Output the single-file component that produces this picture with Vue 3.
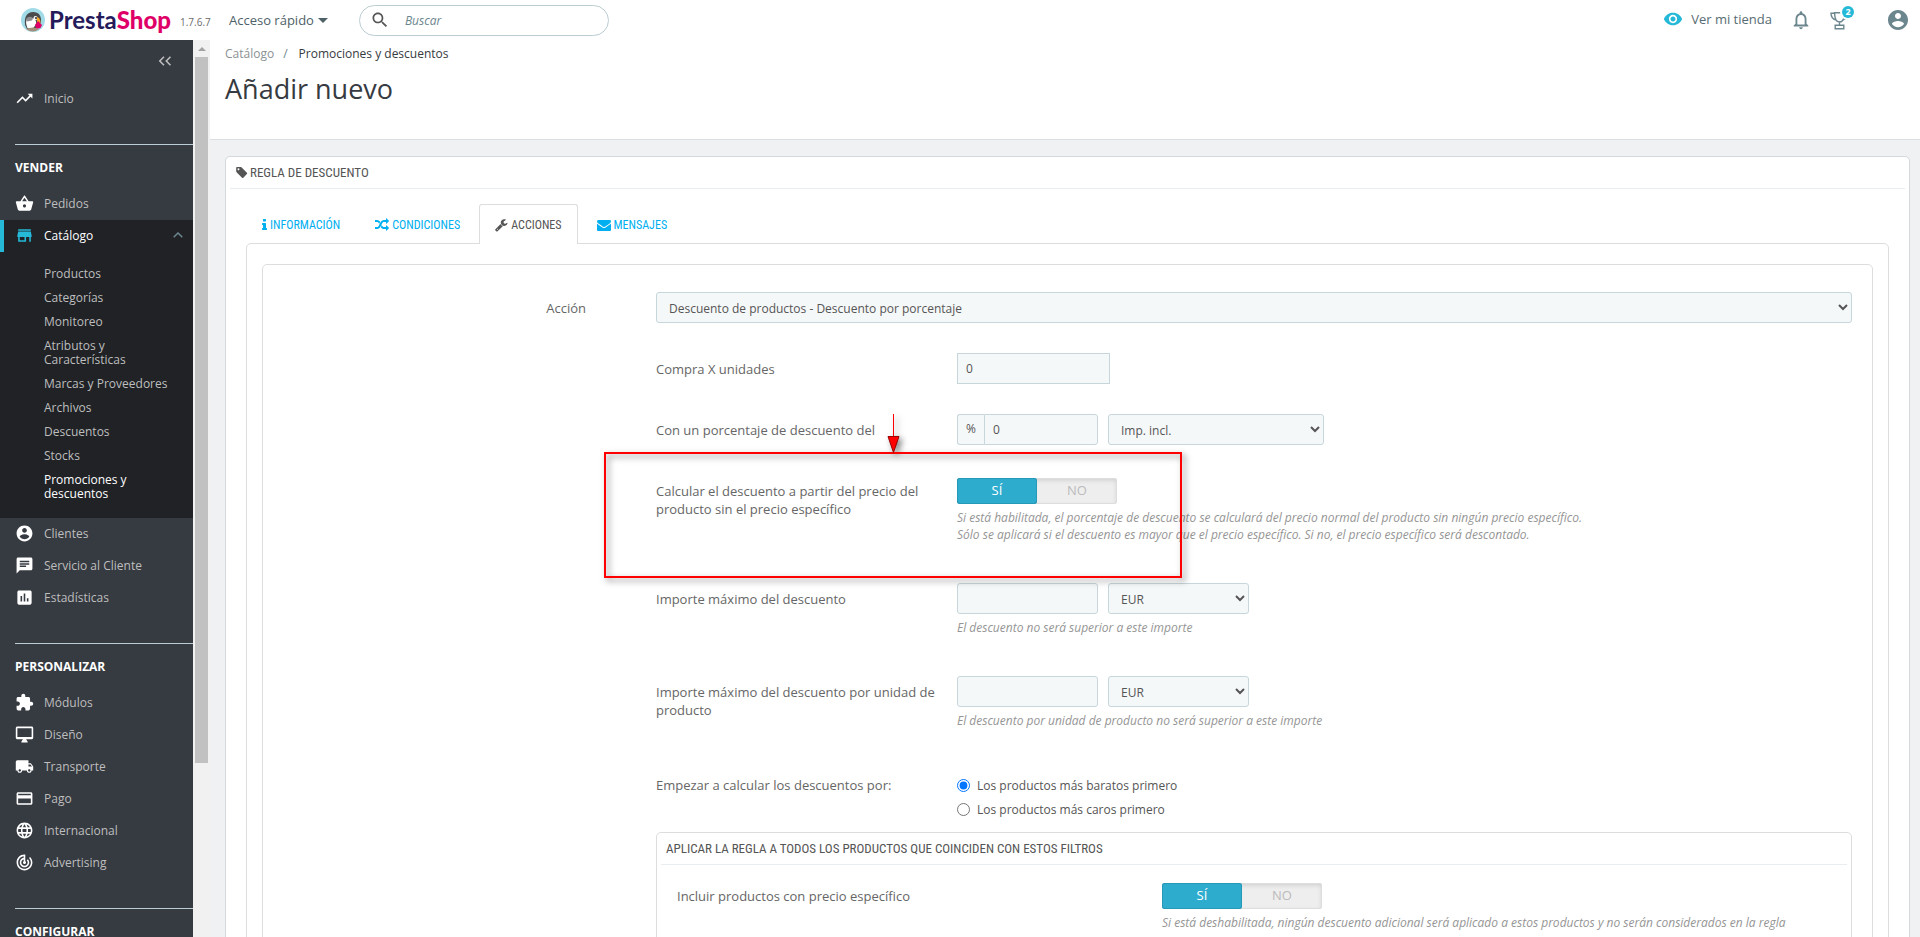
<script setup>
import { ref } from 'vue'

const icons = {
  trend: 'M16 6l2.29 2.29-4.88 4.88-4-4L2 16.59 3.41 18l6-6 4 4 6.3-6.29L22 12V6z',
  basket: 'M17.21 9l-4.38-6.56c-.19-.28-.51-.42-.83-.42-.32 0-.64.14-.83.43L6.79 9H2c-.55 0-1 .45-1 1 0 .09.01.18.04.27l2.54 9.27c.23.84 1 1.46 1.92 1.46h13c.92 0 1.69-.62 1.93-1.46l2.54-9.27L23 10c0-.55-.45-1-1-1h-4.79zM9 9l3-4.4L15 9H9zm3 8c-1.1 0-2-.9-2-2s.9-2 2-2 2 .9 2 2-.9 2-2 2z',
  store: 'M20 4H4v2h16V4zm1 10v-2l-1-5H4l-1 5v2h1v6h10v-6h4v6h2v-6h1zm-9 4H6v-4h6v4z',
  account: 'M12 2C6.48 2 2 6.48 2 12s4.48 10 10 10 10-4.48 10-10S17.52 2 12 2zm0 3c1.66 0 3 1.34 3 3s-1.34 3-3 3-3-1.34-3-3 1.34-3 3-3zm0 14.2c-2.5 0-4.71-1.28-6-3.22.03-1.99 4-3.08 6-3.08 1.99 0 5.97 1.09 6 3.08-1.29 1.94-3.5 3.22-6 3.22z',
  chat: 'M20 2H4c-1.1 0-1.99.9-1.99 2L2 22l4-4h14c1.1 0 2-.9 2-2V4c0-1.1-.9-2-2-2zM6 9h12v2H6V9zm8 5H6v-2h8v2zm4-6H6V6h12v2z',
  chart: 'M19 3H5c-1.1 0-2 .9-2 2v14c0 1.1.9 2 2 2h14c1.1 0 2-.9 2-2V5c0-1.1-.9-2-2-2zM9 17H7v-7h2v7zm4 0h-2V7h2v10zm4 0h-2v-4h2v4z',
  puzzle: 'M20.5 11H19V7c0-1.1-.9-2-2-2h-4V3.5C13 2.12 11.88 1 10.5 1S8 2.12 8 3.5V5H4c-1.1 0-1.99.9-1.99 2v3.8H3.5c1.49 0 2.7 1.21 2.7 2.7s-1.21 2.7-2.7 2.7H2V20c0 1.1.9 2 2 2h3.8v-1.5c0-1.49 1.21-2.7 2.7-2.7 1.49 0 2.7 1.21 2.7 2.7V22H17c1.1 0 2-.9 2-2v-4h1.5c1.38 0 2.5-1.12 2.5-2.5S21.88 11 20.5 11z',
  desktop: 'M21 2H3c-1.1 0-2 .9-2 2v12c0 1.1.9 2 2 2h7l-2 3v1h8v-1l-2-3h7c1.1 0 2-.9 2-2V4c0-1.1-.9-2-2-2zm0 13H3V4h18v11z',
  truck: 'M20 8h-3V4H3c-1.1 0-2 .9-2 2v11h2c0 1.66 1.34 3 3 3s3-1.34 3-3h6c0 1.66 1.34 3 3 3s3-1.34 3-3h2v-5l-3-4zM6 18.5c-.83 0-1.5-.67-1.5-1.5s.67-1.5 1.5-1.5 1.5.67 1.5 1.5-.67 1.5-1.5 1.5zm13.5-9l1.96 2.5H17V9.5h2.5zm-1.5 9c-.83 0-1.5-.67-1.5-1.5s.67-1.5 1.5-1.5 1.5.67 1.5 1.5-.67 1.5-1.5 1.5z',
  card: 'M20 4H4c-1.11 0-1.99.89-1.99 2L2 18c0 1.11.89 2 2 2h16c1.11 0 2-.89 2-2V6c0-1.11-.89-2-2-2zm0 14H4v-6h16v6zm0-10H4V6h16v2z',
  globe: 'M11.99 2C6.47 2 2 6.48 2 12s4.47 10 9.99 10C17.52 22 22 17.52 22 12S17.52 2 11.99 2zm6.93 6h-2.95c-.32-1.25-.78-2.45-1.38-3.56 1.84.63 3.37 1.91 4.33 3.56zM12 4.04c.83 1.2 1.48 2.53 1.91 3.96h-3.82c.43-1.43 1.08-2.76 1.91-3.96zM4.26 14C4.1 13.36 4 12.69 4 12s.1-1.36.26-2h3.38c-.08.66-.14 1.32-.14 2 0 .68.06 1.34.14 2H4.26zm.82 2h2.95c.32 1.25.78 2.45 1.38 3.56-1.84-.63-3.37-1.9-4.33-3.56zm2.95-8H5.08c.96-1.66 2.49-2.93 4.33-3.56C8.81 5.55 8.35 6.75 8.03 8zM12 19.96c-.83-1.2-1.48-2.53-1.91-3.96h3.82c-.43 1.43-1.08 2.76-1.91 3.96zM14.34 14H9.66c-.09-.66-.16-1.32-.16-2 0-.68.07-1.35.16-2h4.68c.09.65.16 1.32.16 2 0 .68-.07 1.34-.16 2zm.25 5.56c.6-1.11 1.06-2.31 1.38-3.56h2.95c-.96 1.65-2.49 2.93-4.33 3.56zM16.36 14c.08-.66.14-1.32.14-2 0-.68-.06-1.34-.14-2h3.38c.16.64.26 1.31.26 2s-.1 1.36-.26 2h-3.38z',
  target: 'M19.07 4.93l-1.41 1.41C19.1 7.79 20 9.79 20 12c0 4.42-3.58 8-8 8s-8-3.58-8-8c0-4.08 3.05-7.44 7-7.93v2.02C8.16 6.57 6 9.03 6 12c0 3.31 2.69 6 6 6s6-2.69 6-6c0-1.66-.67-3.16-1.76-4.24l-1.41 1.41C15.55 9.9 16 10.9 16 12c0 2.21-1.79 4-4 4s-4-1.79-4-4c0-1.86 1.28-3.41 3-3.86v2.14c-.6.35-1 .98-1 1.72 0 1.1.9 2 2 2s2-.9 2-2c0-.74-.4-1.38-1-1.72V2h-1C6.48 2 2 6.48 2 12s4.48 10 10 10 10-4.48 10-10c0-2.76-1.12-5.26-2.93-7.07z',
}

const sections = [
  { items: [{ label: 'Inicio', icon: 'trend' }] },
  {
    title: 'VENDER',
    items: [
      { label: 'Pedidos', icon: 'basket' },
      {
        label: 'Catálogo',
        icon: 'store',
        open: true,
        children: ['Productos', 'Categorías', 'Monitoreo', 'Atributos y Características', 'Marcas y Proveedores', 'Archivos', 'Descuentos', 'Stocks', 'Promociones y descuentos'],
      },
      { label: 'Clientes', icon: 'account' },
      { label: 'Servicio al Cliente', icon: 'chat' },
      { label: 'Estadísticas', icon: 'chart' },
    ],
  },
  {
    title: 'PERSONALIZAR',
    items: [
      { label: 'Módulos', icon: 'puzzle' },
      { label: 'Diseño', icon: 'desktop' },
      { label: 'Transporte', icon: 'truck' },
      { label: 'Pago', icon: 'card' },
      { label: 'Internacional', icon: 'globe' },
      { label: 'Advertising', icon: 'target' },
    ],
  },
  { title: 'CONFIGURAR', items: [] },
]
const currentPage = 'Promociones y descuentos'

const tabs = [
  { label: 'INFORMACIÓN', box: '576 0 640 1792', width: 5, path: 'M1216 1344v128q0 26-19 45t-45 19h-512q-26 0-45-19t-19-45v-128q0-26 19-45t45-19h64v-384h-64q-26 0-45-19t-19-45v-128q0-26 19-45t45-19h384q26 0 45 19t19 45v576h64q26 0 45 19t19 45zm-128-1152v192q0 26-19 45t-45 19h-256q-26 0-45-19t-19-45v-192q0-26 19-45t45-19h256q26 0 45 19t19 45z' },
  { label: 'CONDICIONES', box: '0 0 1792 1792', width: 14, path: 'M666 481q-60 92-137 273-22-45-37-72.5t-40.5-63.5-51-56.5-63-35-81.5-14.5h-224q-14 0-23-9t-9-23v-192q0-14 9-23t23-9h224q250 0 410 225zm1126 799q0 14-9 23l-320 320q-9 9-23 9-13 0-22.5-9.5t-9.5-22.5v-192q-32 0-85 .5t-81 1-73-1-71-5-64-10.5-63-18.5-58-28.5-59-40-55-53.5-56-69.5q59-93 136-273 22 45 37 72.5t40.5 63.5 51 56.5 63 35 81.5 14.5h256v-192q0-14 9-23t23-9q12 0 24 10l319 319q9 9 9 23zm0-896q0 14-9 23l-320 320q-9 9-23 9-13 0-22.5-9.5t-9.5-22.5v-192h-256q-48 0-87 15t-69 45-51 61.5-45 77.5q-32 62-78 171-29 66-49.5 111t-54 105-64 100-74 83-90 68.5-106.5 42-128 16.5h-224q-14 0-23-9t-9-23v-192q0-14 9-23t23-9h224q48 0 87-15t69-45 51-61.5 45-77.5q32-62 78-171 29-66 49.5-111t54-105 64-100 74-83 90-68.5 106.5-42 128-16.5h256v-192q0-14 9-23t23-9q12 0 24 10l319 319q9 9 9 23z' },
  { label: 'ACCIONES', box: '64 0 1728 1792', width: 13, path: 'M448 1472q0-26-19-45t-45-19-45 19-19 45 19 45 45 19 45-19 19-45zm644-420l-682 682q-37 37-90 37-52 0-91-37l-106-108q-38-36-38-90 0-53 38-91l681-681q39 98 114.5 173.5t173.5 114.5zm634-435q0 39-23 106-47 134-164.5 217.5t-258.5 83.5q-185 0-316.5-131.5t-131.5-316.5 131.5-316.5 316.5-131.5q58 0 121.5 16.5t107.5 46.5q16 11 16 28t-16 28l-293 169v224l193 107q5-3 79-48.5t135.5-81 70.5-35.5q15 0 23.5 10t8.5 25z' },
  { label: 'MENSAJES', box: '0 0 1792 1792', width: 14, path: 'M1792 710v794q0 66-47 113t-113 47h-1472q-66 0-113-47t-47-113v-794q44 49 101 87 362 246 497 345 57 42 92.5 65.5t94.5 48 110 24.5h2q51 0 110-24.5t94.5-48 92.5-65.5q170-123 498-345 57-39 100-87zm0-294q0 79-49 151t-122 123q-376 261-468 325-10 7-42.5 31t-54 38.5-52 32.5-57.5 27-50 9h-2q-23 0-50-9t-57.5-27-52-32.5-54-38.5-42.5-31q-91-64-262-182.5t-205-142.5q-62-42-117-115.5t-55-136.5q0-78 41.5-130t118.5-52h1472q65 0 112.5 47t47.5 113z' },
]
const activeTab = ref('ACCIONES')

const units = ref('0')
const percent = ref('0')
const maxAmount = ref('')
const maxUnitAmount = ref('')
const useNormalPrice = ref('1')
const includeSpecial = ref('1')
const order = ref('cheap')
</script>

<template>
  <div class="app">
    <header class="topbar">
      <a class="brand" href="#" aria-label="PrestaShop">
        <svg class="brand-mark" viewBox="0 0 24 24" aria-hidden="true">
          <circle cx="12" cy="12" r="12" fill="#a2dbe8" />
          <path d="M4 17C3 9 6 4 12 4c6 0 8.500 4 8 10l-3 6-11 1z" fill="#4b4b4d" />
          <path d="M5.500 12c2-2.500 5-3 8-1 2 2 2 4 1 6l-3 4-5-1c-1-3-2-5-1-8z" fill="#fff" />
          <path d="M5 11c2-3 5-3 7-.5l-1 2-5 1z" fill="#8c8e91" />
          <circle cx="14.500" cy="10" r="2" fill="#fff" />
          <circle cx="15" cy="10" r="1" fill="#222" />
          <path d="M16 9c3 1 4 4 3 7l-3-2z" fill="#f6a623" />
          <path d="M14 17l3-4 4 4-1.500 3-4 1z" fill="#df0067" />
          <path d="M5 21q7-3 13 0-6 5-13 0z" fill="#a58e77" />
        </svg>
        <span class="brand-name">Presta<b>Shop</b></span>
      </a>
      <span class="version">1.7.6.7</span>
      <button class="quick" type="button">Acceso rápido<i class="caret"></i></button>
      <form class="search" @submit.prevent>
        <svg viewBox="0 0 24 24" aria-hidden="true"><path d="M15.5 14h-.79l-.28-.27C15.41 12.59 16 11.11 16 9.5 16 5.91 13.09 3 9.5 3S3 5.91 3 9.5 5.91 16 9.5 16c1.61 0 3.09-.59 4.23-1.57l.27.28v.79l5 4.99L20.49 19l-4.99-5zm-6 0C7.01 14 5 11.99 5 9.5S7.01 5 9.5 5 14 7.01 14 9.5 11.99 14 9.5 14z" /></svg>
        <input type="search" placeholder="Buscar" aria-label="Buscar" />
      </form>
      <nav class="tools">
        <a class="shop" href="#">
          <svg viewBox="0 0 24 24" aria-hidden="true"><path d="M12 4.5C7 4.5 2.73 7.61 1 12c1.73 4.39 6 7.5 11 7.5s9.27-3.11 11-7.5c-1.73-4.39-6-7.5-11-7.5zM12 17c-2.76 0-5-2.24-5-5s2.24-5 5-5 5 2.24 5 5-2.24 5-5 5zm0-8c-1.66 0-3 1.34-3 3s1.34 3 3 3 3-1.34 3-3-1.34-3-3-3z" /></svg>
          Ver mi tienda
        </a>
        <button class="tool bell" type="button" aria-label="Notificaciones">
          <svg viewBox="0 0 24 24"><path d="M12 22c1.1 0 2-.9 2-2h-4c0 1.1.9 2 2 2zm6-6v-5c0-3.07-1.63-5.64-4.5-6.32V4c0-.83-.67-1.5-1.5-1.5s-1.5.67-1.5 1.5v.68C7.64 5.36 6 7.92 6 11v5l-2 2v1h16v-1l-2-2zm-2 1H8v-6c0-2.48 1.51-4.5 4-4.5s4 2.02 4 4.5v6z" /></svg>
        </button>
        <button class="tool trophy" type="button" aria-label="Logros">
          <svg viewBox="0 0 18 19" fill="none" stroke="#6c868e" stroke-width="1.4"><path d="M4.500 1.700h10c0 6-1.500 9.300-5 9.300S5 8.500 4.500 1.700zM4.500 2.200H1c0 3 1.500 5.800 5 6.800M14.500 2.200H18c0 3-1.500 5.800-5 6.800M9.500 11v3M5.200 14.200h8.600v3.600H5.200z" /></svg>
          <span class="badge">2</span>
        </button>
        <button class="tool user" type="button" aria-label="Cuenta">
          <svg viewBox="2 2 20 20"><path :d="icons.account" /></svg>
        </button>
      </nav>
    </header>

    <div class="body">
      <aside class="sidebar">
        <button class="collapse" type="button" aria-label="Contraer menú">
          <svg viewBox="0 0 14 10" aria-hidden="true"><path d="M6 .8L1.800 5 6 9.200M12.500.8L8.300 5l4.200 4.200" fill="none" stroke="#bebebe" stroke-width="1.6" /></svg>
        </button>
        <section v-for="(section, i) in sections" :key="i" class="menu-section">
          <h2 v-if="section.title">{{ section.title }}</h2>
          <ul>
            <li v-for="item in section.items" :key="item.label" :class="{ open: item.open }">
              <a class="menu-link" href="#">
                <svg viewBox="0 0 24 24" aria-hidden="true"><path :d="icons[item.icon]" /></svg>
                <span>{{ item.label }}</span>
                <svg v-if="item.open" class="chevron" viewBox="0 0 10 6" aria-hidden="true"><path d="M.7 5.300L5 1l4.300 4.300" /></svg>
              </a>
              <ul v-if="item.children" class="submenu">
                <li v-for="child in item.children" :key="child">
                  <a href="#" :class="{ current: child === currentPage }">{{ child }}</a>
                </li>
              </ul>
            </li>
          </ul>
        </section>
      </aside>
      <div class="rail" aria-hidden="true"><i class="rail-up"></i><i class="rail-thumb"></i></div>

      <main>
        <div class="page-head">
          <nav class="crumbs"><a href="#">Catálogo</a><i>/</i><span>Promociones y descuentos</span></nav>
          <h1>Añadir nuevo</h1>
        </div>

        <div class="panel">
          <h3 class="panel-title">
            <svg viewBox="0 0 1728 1792" aria-hidden="true"><path d="M576 448q0-53-37.5-90.5t-90.5-37.5-90.5 37.5-37.5 90.5 37.5 90.5 90.5 37.5 90.5-37.5 37.5-90.5zm1067 576q0 53-37 90l-491 492q-39 37-91 37-53 0-90-37l-715-716q-38-37-64.5-101t-26.5-117v-416q0-52 38-90t90-38h416q53 0 117 26.5t102 64.5l715 714q37 39 37 91z" /></svg>
            REGLA DE DESCUENTO
          </h3>

          <div class="tabs" role="tablist">
            <button v-for="tab in tabs" :key="tab.label" type="button" role="tab" :aria-selected="activeTab === tab.label" :class="{ active: activeTab === tab.label }" @click="activeTab = tab.label">
              <svg :viewBox="tab.box" :width="tab.width" height="14" aria-hidden="true"><path :d="tab.path" /></svg>
              {{ tab.label }}
            </button>
          </div>

          <form class="pane" @submit.prevent>
            <div class="box">
              <div class="main-row">
                <label class="label" for="action">Acción</label>
                <select id="action" class="field">
                  <option>Descuento de productos - Descuento por porcentaje</option>
                </select>
              </div>
              <div class="options">
                <div class="row">
                  <label class="label" for="units">Compra X unidades</label>
                  <div><input id="units" v-model="units" class="field units" type="text" /></div>
                </div>

                <div class="row">
                  <label class="label" for="percent">Con un porcentaje de descuento del</label>
                  <div class="controls">
                    <div class="group">
                      <span class="addon">%</span>
                      <input id="percent" v-model="percent" class="field" type="text" />
                    </div>
                    <select class="field tax" aria-label="Impuestos"><option>Imp. incl.</option></select>
                  </div>
                </div>

                <div class="row marked">
                  <span id="normal-label" class="label">Calcular el descuento a partir del precio del producto sin el precio específico</span>
                  <div>
                    <div class="switch" role="radiogroup" aria-labelledby="normal-label">
                      <input id="normal-yes" v-model="useNormalPrice" type="radio" name="normal" value="1" /><label for="normal-yes">SÍ</label>
                      <input id="normal-no" v-model="useNormalPrice" type="radio" name="normal" value="0" /><label for="normal-no">NO</label>
                    </div>
                    <p class="help">Si está habilitada, el porcentaje de descuento se calculará del precio normal del producto sin ningún precio específico.<br />Sólo se aplicará si el descuento es mayor que el precio específico. Si no, el precio específico será descontado.</p>
                  </div>
                  <div class="marker" aria-hidden="true">
                    <svg viewBox="0 0 14 40"><path d="M7.500 0v24" stroke="#f00" stroke-width="1" /><path d="M2 22.500h11L7.500 38.500z" fill="#f00" stroke="#900" /></svg>
                  </div>
                </div>

                <div class="row">
                  <label class="label" for="max">Importe máximo del descuento</label>
                  <div>
                    <div class="controls">
                      <input id="max" v-model="maxAmount" class="field amount" type="text" />
                      <select class="field amount" aria-label="Moneda"><option>EUR</option></select>
                    </div>
                    <p class="help">El descuento no será superior a este importe</p>
                  </div>
                </div>

                <div class="row">
                  <label class="label" for="max-unit">Importe máximo del descuento por unidad de producto</label>
                  <div>
                    <div class="controls">
                      <input id="max-unit" v-model="maxUnitAmount" class="field amount" type="text" />
                      <select class="field amount" aria-label="Moneda por unidad"><option>EUR</option></select>
                    </div>
                    <p class="help">El descuento por unidad de producto no será superior a este importe</p>
                  </div>
                </div>

                <div class="row">
                  <span id="order-label" class="label">Empezar a calcular los descuentos por:</span>
                  <div class="radios" role="radiogroup" aria-labelledby="order-label">
                    <label><input v-model="order" type="radio" name="order" value="cheap" />Los productos más baratos primero</label>
                    <label><input v-model="order" type="radio" name="order" value="expensive" />Los productos más caros primero</label>
                  </div>
                </div>

                <div class="filters">
                  <h4 class="panel-title">APLICAR LA REGLA A TODOS LOS PRODUCTOS QUE COINCIDEN CON ESTOS FILTROS</h4>
                  <div class="row filter-row">
                    <span id="special-label" class="label">Incluir productos con precio específico</span>
                    <div>
                      <div class="switch" role="radiogroup" aria-labelledby="special-label">
                        <input id="special-yes" v-model="includeSpecial" type="radio" name="special" value="1" /><label for="special-yes">SÍ</label>
                        <input id="special-no" v-model="includeSpecial" type="radio" name="special" value="0" /><label for="special-no">NO</label>
                      </div>
                      <p class="help">Si está deshabilitada, ningún descuento adicional será aplicado a estos productos y no serán considerados en la regla</p>
                    </div>
                  </div>
                </div>
              </div>
            </div>
          </form>
        </div>
      </main>
    </div>
  </div>
</template>

<style>
html,
body {
  margin: 0;
}
</style>

<style scoped>
.app {
  display: flex;
  flex-direction: column;
  height: 100vh;
  overflow: hidden;
  background: #eff1f2;
  color: #363a41;
  font-family: 'Open Sans', 'Noto Sans', sans-serif;
  font-size: 12px;
}
.app *,
.app *::before {
  box-sizing: border-box;
}
a {
  color: inherit;
  text-decoration: none;
}
button,
input,
select {
  margin: 0;
  font-family: inherit;
}
button {
  border: 0;
  padding: 0;
  background: none;
  color: inherit;
  cursor: pointer;
}
ul {
  margin: 0;
  padding: 0;
  list-style: none;
}
svg {
  display: block;
  flex: none;
}

/* Top bar */
.topbar {
  display: flex;
  flex: none;
  align-items: center;
  height: 40px;
  padding: 0 12px 0 21px;
  background: #fff;
  color: #4e6167;
}
.brand {
  display: flex;
  align-items: center;
  gap: 4px;
}
.brand-mark {
  width: 24px;
  height: 24px;
}
.brand-name {
  color: #251b5b;
  font-family: Lato, sans-serif;
  font-size: 24px;
  font-weight: 700;
  line-height: 24px;
}
.brand-name b {
  color: #df0067;
}
.version {
  width: 58px;
  padding: 4px 0 0 9px;
  color: #6b6b6b;
  font-size: 10px;
}
.quick {
  display: flex;
  align-items: center;
  gap: 4px;
  font-size: 13px;
}
.caret {
  border: 5px solid transparent;
  border-top: 5px solid #4e6167;
  border-bottom: 0;
}
.search {
  display: flex;
  align-items: center;
  width: 250px;
  height: 31px;
  margin-left: 31px;
  padding: 0 14px 0 10px;
  border: 1px solid #bbcdd2;
  border-radius: 16px;
}
.search svg {
  width: 20px;
  height: 20px;
  fill: #555;
}
.search input {
  flex: 1;
  min-width: 0;
  margin-left: 15px;
  padding: 0;
  border: 0;
  outline: 0;
  background: none;
  font-size: 12px;
  font-style: italic;
}
.search input::placeholder {
  color: #6c868e;
}
.tools {
  display: flex;
  align-items: center;
  margin-left: auto;
}
.shop {
  display: flex;
  align-items: center;
  gap: 8px;
  padding-bottom: 2px;
  color: #576c72;
  font-size: 13px;
}
.shop svg {
  width: 20px;
  height: 20px;
  fill: #25b9d7;
}
.tool svg {
  fill: #6c868e;
}
.bell {
  margin-left: 18px;
}
.bell svg {
  width: 22px;
  height: 22px;
}
.trophy {
  position: relative;
  margin-left: 18px;
}
.trophy svg {
  width: 18px;
  height: 19px;
  fill: none;
}
.badge {
  position: absolute;
  top: -5px;
  left: 12px;
  width: 12px;
  height: 12px;
  border-radius: 50%;
  background: #25b9d7;
  box-shadow: 0 0 0 2px #fff;
  color: #fff;
  font-size: 9px;
  font-weight: 700;
  line-height: 12px;
}
.user {
  margin-left: 40px;
}
.user svg {
  width: 20px;
  height: 20px;
}

/* Sidebar */
.body {
  display: flex;
  flex: 1;
  min-height: 0;
}
.sidebar {
  display: flex;
  flex: none;
  flex-direction: column;
  width: 193px;
  overflow: hidden;
  background: #363a41;
  color: #bebebe;
}
.collapse {
  flex: none;
  align-self: flex-end;
  height: 41px;
  margin-bottom: 2px;
  padding-right: 21px;
}
.collapse svg {
  width: 14px;
  height: 10px;
}
.menu-section {
  flex: none;
  padding-bottom: 29px;
}
.menu-section + .menu-section::before {
  content: '';
  display: block;
  height: 1px;
  margin-left: 15px;
  background: #bbcdd2;
}
.menu-section h2 {
  height: 43px;
  margin: 0;
  padding: 16px 0 0 15px;
  color: #fff;
  font-size: 12px;
  font-weight: 700;
  line-height: 14px;
}
.menu-link {
  display: flex;
  align-items: center;
  gap: 10px;
  height: 32px;
  padding: 0 10px 2px 15px;
}
.menu-link svg {
  width: 19px;
  height: 19px;
  fill: #fff;
}
.open {
  background: #202226;
}
.open .menu-link {
  padding-left: 11px;
  border-left: 4px solid #25b9d7;
  color: #fff;
}
.open .menu-link svg {
  fill: #25b9d7;
}
.menu-link .chevron {
  width: 10px;
  height: 6px;
  margin-left: auto;
  stroke: #6c868e;
  stroke-width: 1.5;
}
.open .menu-link .chevron {
  fill: none;
}
.submenu {
  display: flex;
  flex-direction: column;
  gap: 10px;
  padding: 15px 10px 17px 44px;
  line-height: 14px;
}
.submenu a {
  display: block;
}
.submenu .current {
  color: #fff;
}
.rail {
  display: flex;
  flex: none;
  flex-direction: column;
  align-items: center;
  width: 17px;
  background: #f1f1f1;
}
.rail-up {
  margin: 7px 0 6px;
  border: 4px solid transparent;
  border-top: 0;
  border-bottom: 4px solid #a3a3a3;
}
.rail-thumb {
  width: 13px;
  height: 78.7%;
  background: #c1c1c1;
}

/* Page */
main {
  flex: 1;
  min-width: 0;
  overflow: hidden;
}
.page-head {
  height: 100px;
  padding: 6px 15px 0;
  border-bottom: 1px solid #dbdfe1;
  background: #fff;
}
.crumbs {
  line-height: 16px;
}
.crumbs a {
  color: #8b9194;
}
.crumbs i {
  margin: 0 11px 0 9px;
  color: #6c868e;
  font-style: normal;
}
h1 {
  margin: 9px 0 0;
  font-size: 27px;
  font-weight: 400;
  line-height: 36px;
}
.panel {
  min-height: 100%;
  margin: 16px 10px 0 15px;
  padding: 0 4px;
  border: 1px solid #d3d8db;
  border-radius: 5px;
  background: #fff;
  color: #555;
}
.panel-title {
  display: flex;
  align-items: center;
  gap: 2px;
  height: 32px;
  margin: 0;
  padding-left: 5px;
  border-bottom: 1px solid #eaedef;
  font-family: 'Ubuntu Condensed', 'Roboto Condensed', 'Open Sans Condensed', Roboto, sans-serif;
  font-size: 13px;
  font-weight: 400;
  white-space: nowrap;
}
.panel-title svg {
  width: 13px;
  height: 13px;
  fill: #555;
}
.tabs {
  display: flex;
  gap: 3px;
  margin: 15px 16px 0;
}
.tabs button {
  display: flex;
  align-items: center;
  gap: 3px;
  height: 40px;
  margin-bottom: -1px;
  padding: 0 15px;
  border: 1px solid transparent;
  border-bottom: 0;
  color: #00aff0;
  font-family: 'Ubuntu Condensed', 'Roboto Condensed', 'Open Sans Condensed', Roboto, sans-serif;
  font-size: 12px;
}
.tabs svg {
  fill: currentColor;
}
.tabs .active {
  z-index: 1;
  border-color: #ddd;
  border-radius: 3px 3px 0 0;
  background: #fff;
  color: #555;
}
.pane {
  margin: 0 16px;
  padding: 20px 15px;
  border: 1px solid #ddd;
  border-radius: 5px;
}
.box {
  padding: 27px 20px 27px 0;
  border: 1px solid #ddd;
  border-radius: 5px;
}
.main-row {
  display: grid;
  grid-template-columns: 323fr 1196fr;
  column-gap: 70px;
}
.main-row > .label {
  padding-right: 0;
  text-align: right;
}
.options {
  margin-left: calc((100% - 70px) * 323 / 1519 + 70px);
}
.row {
  display: grid;
  grid-template-columns: 25% 75%;
  margin: 30px -8px 0 0;
}
.label {
  padding: 7px 10px 0 0;
  color: #666;
  font-size: 13px;
  line-height: 18px;
}
.field {
  width: 100%;
  height: 31px;
  padding: 0 8px;
  border: 1px solid #c7d6db;
  border-radius: 3px;
  outline: 0;
  background: #f5f8f9;
  color: #555;
  font-size: 12px;
}
select.field {
  padding-top: 2px;
}
.field.units {
  width: 153px;
  border-radius: 0;
}
.controls {
  display: flex;
  gap: 10px;
}
.group {
  display: flex;
  width: 141px;
}
.addon {
  width: 27px;
  border: 1px solid #c7d6db;
  border-right: 0;
  border-radius: 3px 0 0 3px;
  background: #f5f8f9;
  line-height: 28px;
  text-align: center;
}
.group .field {
  flex: 1;
  min-width: 0;
  border-radius: 0 3px 3px 0;
}
.field.tax {
  width: 216px;
}
.field.amount {
  width: 141px;
}
.switch {
  display: flex;
  width: 160px;
  height: 26px;
  margin-top: 3px;
  border-radius: 3px;
  background: #eee;
  box-shadow: inset 0 0 0 1px #ddd, inset 0 2px 5px #ccc;
}
.switch input {
  position: absolute;
  opacity: 0;
}
.switch label {
  flex: 1;
  border-radius: 3px;
  color: #bbb;
  font-size: 13px;
  line-height: 25px;
  text-align: center;
}
.switch input:checked + label {
  background: #2eacce;
  box-shadow: inset 0 0 0 1px #2798b6;
  color: #fff;
}
.help {
  margin: 5px 0 10px;
  color: #959595;
  font-style: italic;
  line-height: 17px;
}
.radios {
  padding-top: 4px;
}
.radios label {
  display: flex;
  align-items: center;
  gap: 7px;
  height: 24px;
}
.radios input {
  width: 13px;
  height: 13px;
}
.marked {
  position: relative;
}
.marker {
  position: absolute;
  top: -23px;
  left: -52px;
  width: 578px;
  height: 126px;
  border: 2px solid #f00;
  filter: drop-shadow(3px 3px 3px rgba(0, 0, 0, 0.5));
  pointer-events: none;
}
.marker svg {
  position: absolute;
  top: -40px;
  left: 280px;
  width: 14px;
  height: 40px;
}
.filters {
  margin-top: 11px;
  padding: 0 4px 30px;
  border: 1px solid #ddd;
  border-radius: 5px;
}
.filter-row {
  grid-template-columns: 5fr 7fr;
  margin: 15px 6px 0 16px;
}
</style>
